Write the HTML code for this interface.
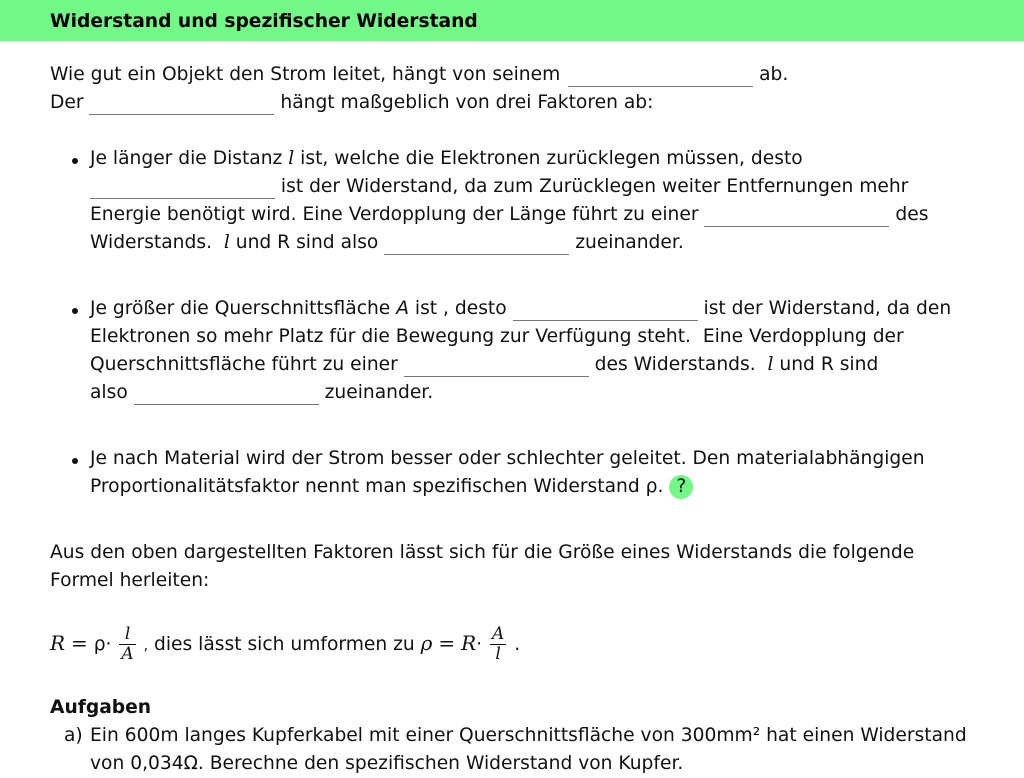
<!DOCTYPE html>
<html><head><meta charset="utf-8"><style>
body{margin:0;width:1024px;height:768px;overflow:hidden;background:#fff;font-family:"DejaVu Sans","Liberation Sans",sans-serif;font-size:18.67px;color:#111;position:relative}
.h{position:absolute;left:0;top:0;width:1024px;height:41px;background:#72f887}
.h div{position:absolute;left:50px;top:11px;font-weight:bold;font-size:18.67px;color:#000}
.l{position:absolute;white-space:nowrap;line-height:28px;height:28px;margin-top:1px}
.b{display:inline-block;width:185px;height:1px;border-bottom:1px solid #777;vertical-align:-7px;margin:0}
.i{font-family:"DejaVu Serif","Liberation Serif",serif;font-style:italic}
.dot{position:absolute;width:6px;height:6px;border-radius:50%;background:#111}
.q{display:inline-block;width:24px;height:24px;border-radius:50%;background:#72f887;text-align:center;line-height:24px;vertical-align:middle;margin-left:0}
.fr{display:inline-block;vertical-align:middle;text-align:center;font-family:"DejaVu Serif",serif;font-style:italic;font-size:17px;line-height:19px;margin:0 2px}
.fr span{display:block;padding:0 2px}
.fr span:first-child{border-bottom:1px solid #111}
</style></head><body>
<div class="h"><div>Widerstand und spezifischer Widerstand</div></div>
<div class="l" style="left:50px;top:60px">Wie gut ein Objekt den Strom leitet, hängt von seinem <span class="b" style="margin-left:2px"></span> ab.</div>
<div class="l" style="left:50px;top:88px">Der <span class="b"></span> hängt maßgeblich von drei Faktoren ab:</div>

<div class="dot" style="left:72px;top:158px"></div>
<div class="l" style="left:90px;top:144px">Je länger die Distanz <span class="i">l</span> ist, welche die Elektronen zurücklegen müssen, desto</div>
<div class="l" style="left:90px;top:172px"><span class="b"></span> ist der Widerstand, da zum Zurücklegen weiter Entfernungen mehr</div>
<div class="l" style="left:90px;top:200px">Energie benötigt wird. Eine Verdopplung der Länge führt zu einer <span class="b"></span> des</div>
<div class="l" style="left:90px;top:228px">Widerstands. &nbsp;<span class="i">l</span> und R sind also <span class="b"></span> zueinander.</div>

<div class="dot" style="left:72px;top:308px"></div>
<div class="l" style="left:90px;top:294px">Je größer die Querschnittsfläche <span style="font-style:italic">A</span> ist , desto <span class="b"></span> ist der Widerstand, da den</div>
<div class="l" style="left:90px;top:322px">Elektronen so mehr Platz für die Bewegung zur Verfügung steht. &nbsp;Eine Verdopplung der</div>
<div class="l" style="left:90px;top:350px">Querschnittsfläche führt zu einer <span class="b"></span> des Widerstands. &nbsp;<span class="i">l</span> und R sind</div>
<div class="l" style="left:90px;top:378px">also <span class="b"></span> zueinander.</div>

<div class="dot" style="left:72px;top:458px"></div>
<div class="l" style="left:90px;top:444px">Je nach Material wird der Strom besser oder schlechter geleitet. Den materialabhängigen</div>
<div class="l" style="left:90px;top:472px">Proportionalitätsfaktor nennt man spezifischen Widerstand ρ. <span class="q">?</span></div>

<div class="l" style="left:50px;top:538px">Aus den oben dargestellten Faktoren lässt sich für die Größe eines Widerstands die folgende</div>
<div class="l" style="left:50px;top:566px">Formel herleiten:</div>

<div class="l" style="left:50px;top:620px;height:44px;line-height:44px"><span class="i" style="font-size:20px">R</span> <span style="font-family:'DejaVu Serif',serif;font-size:20px">=</span> ρ· <span class="fr"><span>l</span><span>A</span></span> <span style="font-size:14px">,</span> dies lässt sich umformen zu <span class="i" style="font-size:20px">ρ</span> <span style="font-family:'DejaVu Serif',serif;font-size:20px">=</span> <span class="i" style="font-size:20px">R</span>· <span class="fr"><span>A</span><span>l</span></span> .</div>

<div class="l" style="left:50px;top:693px;font-weight:bold">Aufgaben</div>
<div class="l" style="left:64px;top:721px">a)</div>
<div class="l" style="left:90px;top:721px">Ein 600m langes Kupferkabel mit einer Querschnittsfläche von 300mm² hat einen Widerstand</div>
<div class="l" style="left:90px;top:749px">von 0,034Ω. Berechne den spezifischen Widerstand von Kupfer.</div>
</body></html>
